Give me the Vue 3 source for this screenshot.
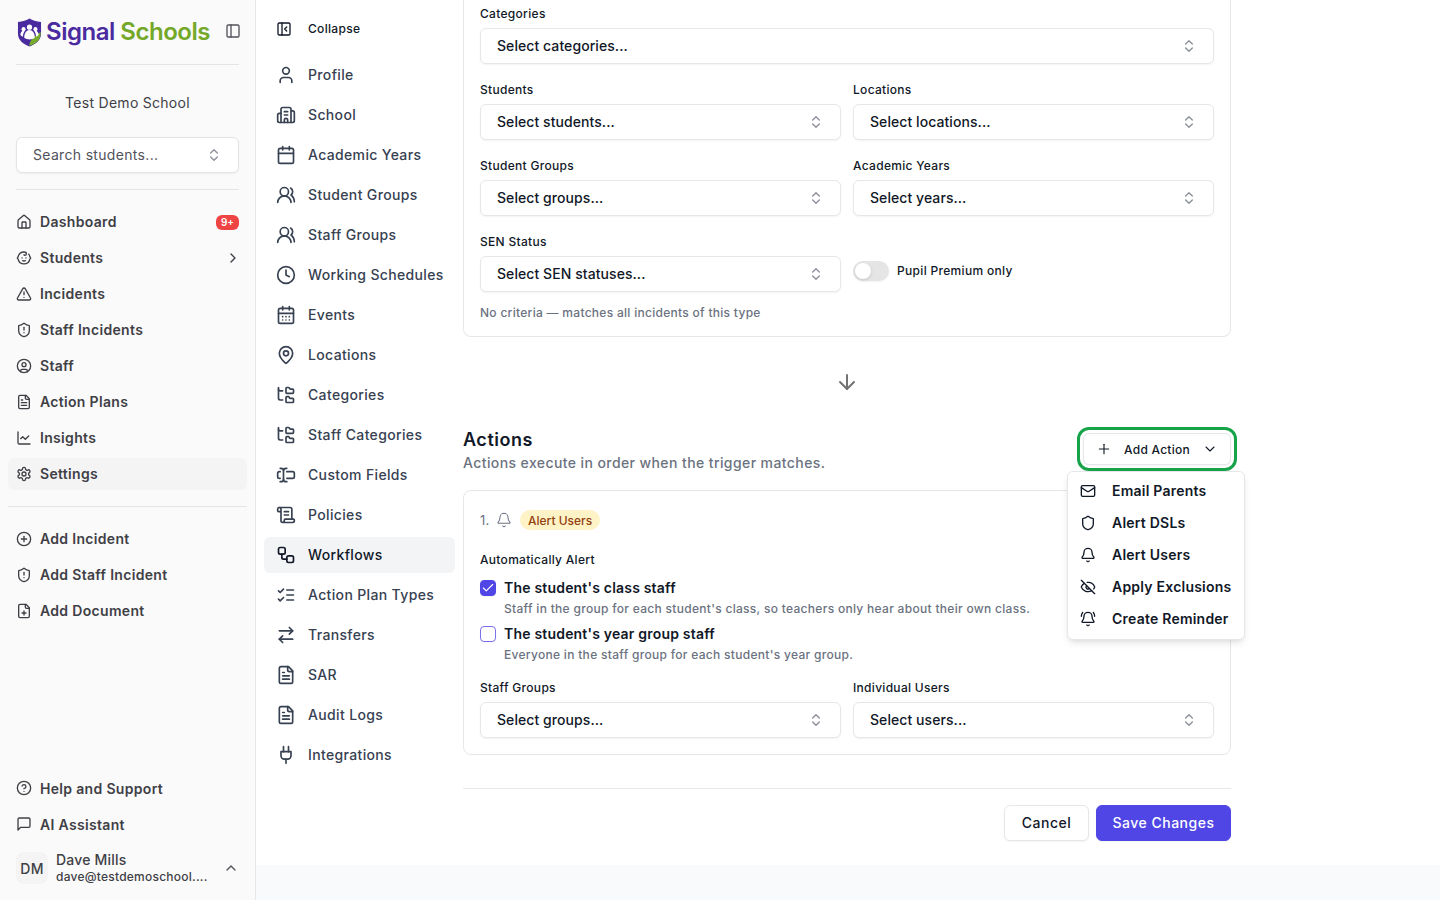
<script setup>
import { h } from 'vue'

const c = (x, y, r) => `M${x - r} ${y}a${r} ${r} 0 1 0 ${2 * r} 0a${r} ${r} 0 1 0 ${-2 * r} 0`
const rr = (x, y, w, h2, r) => `M${x + r} ${y}h${w - 2 * r}a${r} ${r} 0 0 1 ${r} ${r}v${h2 - 2 * r}a${r} ${r} 0 0 1 ${-r} ${r}h${-(w - 2 * r)}a${r} ${r} 0 0 1 ${-r} ${-r}v${-(h2 - 2 * r)}a${r} ${r} 0 0 1 ${r} ${-r}z`

const shield = 'M20 13c0 5-3.5 7.5-7.66 8.95a1 1 0 0 1-.67-.01C7.5 20.5 4 18 4 13V6a1 1 0 0 1 1-1c2 0 4.5-1.2 6.24-2.72a1.17 1.17 0 0 1 1.52 0C14.51 3.81 17 5 19 5a1 1 0 0 1 1 1z'
const file = 'M15 2H6a2 2 0 0 0-2 2v16a2 2 0 0 0 2 2h12a2 2 0 0 0 2-2V7Z'
const fold = 'M14 2v4a2 2 0 0 0 2 2h4'
const bellTop = 'M3.262 15.326A1 1 0 0 0 4 17h16a1 1 0 0 0 .74-1.673C19.41 13.956 18 12.499 18 8A6 6 0 0 0 6 8c0 4.499-1.411 5.956-2.738 7.326'
const fileText = [file, fold, 'M10 9H8', 'M16 13H8', 'M16 17H8']
const folderTree = [
  'M20 10a1 1 0 0 0 1-1V6a1 1 0 0 0-1-1h-2.5a1 1 0 0 1-.8-.4l-.9-1.2A1 1 0 0 0 15 3h-2a1 1 0 0 0-1 1v5a1 1 0 0 0 1 1Z',
  'M20 21a1 1 0 0 0 1-1v-3a1 1 0 0 0-1-1h-2.9a1 1 0 0 1-.88-.55l-.42-.85a1 1 0 0 0-.92-.6H13a1 1 0 0 0-1 1v5a1 1 0 0 0 1 1Z',
  'M3 5a2 2 0 0 0 2 2h3', 'M3 3v13a2 2 0 0 0 2 2h3'
]
const usersRound = ['M18 21a8 8 0 0 0-16 0', c(10, 8, 5), 'M22 20c0-3.37-2-6.5-4-8a5 5 0 0 0-.45-8.3']

const paths = {
  panel: [rr(3, 3, 18, 18, 2), 'M9 3v18'],
  updown: ['m7 15 5 5 5-5', 'm7 9 5-5 5 5'],
  house: ['M15 21v-8a1 1 0 0 0-1-1h-4a1 1 0 0 0-1 1v8', 'M3 10a2 2 0 0 1 .709-1.528l7-5.999a2 2 0 0 1 2.582 0l7 5.999A2 2 0 0 1 21 10v9a2 2 0 0 1-2 2H5a2 2 0 0 1-2-2z'],
  baby: ['M9 12h.01', 'M15 12h.01', 'M10 16c.5.3 1.2.5 2 .5s1.5-.2 2-.5', 'M19 6.3a9 9 0 0 1 1.8 3.9 2 2 0 0 1 0 3.6 9 9 0 0 1-17.6 0 2 2 0 0 1 0-3.6A9 9 0 0 1 12 3c2 0 3.5 1.1 3.5 2.5s-.9 2.5-2 2.5c-.8 0-1.5-.4-1.5-1'],
  triangle: ['m21.73 18-8-14a2 2 0 0 0-3.48 0l-8 14A2 2 0 0 0 4 21h16a2 2 0 0 0 1.73-3', 'M12 9v4', 'M12 17h.01'],
  shieldAlert: [shield, 'M12 8v4', 'M12 16h.01'],
  circleUser: [c(12, 12, 10), c(12, 10, 3), 'M7 20.662V19a2 2 0 0 1 2-2h6a2 2 0 0 1 2 2v1.662'],
  fileText,
  chart: ['M3 3v16a2 2 0 0 0 2 2h16', 'm19 9-5 5-4-4-3 3'],
  settings: ['M12.22 2h-.44a2 2 0 0 0-2 2v.18a2 2 0 0 1-1 1.73l-.43.25a2 2 0 0 1-2 0l-.15-.08a2 2 0 0 0-2.73.73l-.22.38a2 2 0 0 0 .73 2.73l.15.1a2 2 0 0 1 1 1.72v.51a2 2 0 0 1-1 1.74l-.15.09a2 2 0 0 0-.73 2.73l.22.38a2 2 0 0 0 2.73.73l.15-.08a2 2 0 0 1 2 0l.43.25a2 2 0 0 1 1 1.73V20a2 2 0 0 0 2 2h.44a2 2 0 0 0 2-2v-.18a2 2 0 0 1 1-1.73l.43-.25a2 2 0 0 1 2 0l.15.08a2 2 0 0 0 2.73-.73l.22-.39a2 2 0 0 0-.73-2.73l-.15-.08a2 2 0 0 1-1-1.74v-.5a2 2 0 0 1 1-1.74l.15-.09a2 2 0 0 0 .73-2.73l-.22-.38a2 2 0 0 0-2.73-.73l-.15.08a2 2 0 0 1-2 0l-.43-.25a2 2 0 0 1-1-1.73V4a2 2 0 0 0-2-2z', c(12, 12, 3)],
  circlePlus: [c(12, 12, 10), 'M8 12h8', 'M12 8v8'],
  filePlus: [file, fold, 'M9 15h6', 'M12 18v-6'],
  help: [c(12, 12, 10), 'M9.09 9a3 3 0 0 1 5.83 1c0 2-3 3-3 3', 'M12 17h.01'],
  message: ['M21 15a2 2 0 0 1-2 2H7l-4 4V5a2 2 0 0 1 2-2h14a2 2 0 0 1 2 2z'],
  up: ['m18 15-6-6-6 6'],
  right: ['m9 18 6-6-6-6'],
  down: ['m6 9 6 6 6-6'],
  collapse: [rr(3, 3, 18, 18, 2), 'M9 3v18', 'm16 15-3-3 3-3'],
  user: ['M19 21v-2a4 4 0 0 0-4-4H9a4 4 0 0 0-4 4v2', c(12, 7, 4)],
  building: ['M10 12h4', 'M10 8h4', 'M14 21v-3a2 2 0 0 0-4 0v3', 'M6 10H4a2 2 0 0 0-2 2v7a2 2 0 0 0 2 2h16a2 2 0 0 0 2-2V9a2 2 0 0 0-2-2h-2', 'M6 21V5a2 2 0 0 1 2-2h8a2 2 0 0 1 2 2v16'],
  calendar: ['M8 2v4', 'M16 2v4', rr(3, 4, 18, 18, 2), 'M3 10h18'],
  usersRound,
  clock: [c(12, 12, 10), 'M12 6v6l4 2'],
  calendarDays: ['M8 2v4', 'M16 2v4', rr(3, 4, 18, 18, 2), 'M3 10h18', 'M8 14h.01', 'M12 14h.01', 'M16 14h.01', 'M8 18h.01', 'M12 18h.01', 'M16 18h.01'],
  pin: ['M20 10c0 4.993-5.539 10.193-7.399 11.799a1 1 0 0 1-1.202 0C9.539 20.193 4 14.993 4 10a8 8 0 0 1 16 0', c(12, 10, 3)],
  folderTree,
  textInput: ['M5 4h1a3 3 0 0 1 3 3 3 3 0 0 1 3-3h1', 'M13 20h-1a3 3 0 0 1-3-3 3 3 0 0 1-3 3H5', 'M5 16H4a2 2 0 0 1-2-2v-4a2 2 0 0 1 2-2h1', 'M13 8h7a2 2 0 0 1 2 2v4a2 2 0 0 1-2 2h-7', 'M9 7v10'],
  scroll: ['M15 12h-5', 'M15 8h-5', 'M19 17V5a2 2 0 0 0-2-2H4', 'M8 21h12a2 2 0 0 0 2-2v-1a1 1 0 0 0-1-1H11a1 1 0 0 0-1 1v1a2 2 0 1 1-4 0V5a2 2 0 1 0-4 0v2a1 1 0 0 0 1 1h3'],
  workflow: [rr(3, 3, 8, 8, 2), 'M7 11v4a2 2 0 0 0 2 2h4', rr(13, 13, 8, 8, 2)],
  listChecks: ['m3 17 2 2 4-4', 'm3 7 2 2 4-4', 'M13 6h8', 'M13 12h8', 'M13 18h8'],
  transfer: ['m16 3 4 4-4 4', 'M20 7H4', 'm8 21-4-4 4-4', 'M4 17h16'],
  plug: ['M12 22v-5', 'M9 8V2', 'M15 8V2', 'M18 8v5a4 4 0 0 1-4 4h-4a4 4 0 0 1-4-4V8Z'],
  arrowDown: ['M12 5v14', 'm19 12-7 7-7-7'],
  plus: ['M5 12h14', 'M12 5v14'],
  mail: ['m22 7-8.991 5.727a2 2 0 0 1-2.009 0L2 7', rr(2, 4, 20, 16, 2)],
  shield: [shield],
  bell: ['M10.268 21a2 2 0 0 0 3.464 0', bellTop],
  eyeOff: ['M10.733 5.076a10.744 10.744 0 0 1 11.205 6.575 1 1 0 0 1 0 .696 10.747 10.747 0 0 1-1.444 2.49', 'M14.084 14.158a3 3 0 0 1-4.242-4.242', 'M17.479 17.499a10.75 10.75 0 0 1-15.417-5.151 1 1 0 0 1 0-.696 10.75 10.75 0 0 1 4.446-5.143', 'm2 2 20 20'],
  bellRing: ['M10.268 21a2 2 0 0 0 3.464 0', 'M22 8c0-2.3-.8-4.3-2-6', bellTop, 'M4 2C2.8 3.7 2 5.7 2 8'],
  check: ['M20 6 9 17l-5-5']
}

const Icon = (props) => h('svg', {
  width: props.size || 16,
  height: props.size || 16,
  viewBox: '0 0 24 24',
  fill: 'none',
  stroke: 'currentColor',
  'stroke-width': props.sw || 2,
  'stroke-linecap': 'round',
  'stroke-linejoin': 'round',
  style: 'flex:none;display:block'
}, paths[props.name].map((d) => h('path', { d })))
Icon.props = ['name', 'size', 'sw']

const mainNav = [
  { label: 'Dashboard', icon: 'house', badge: '9+' },
  { label: 'Students', icon: 'baby', chevron: true },
  { label: 'Incidents', icon: 'triangle' },
  { label: 'Staff Incidents', icon: 'shieldAlert' },
  { label: 'Staff', icon: 'circleUser' },
  { label: 'Action Plans', icon: 'fileText' },
  { label: 'Insights', icon: 'chart' },
  { label: 'Settings', icon: 'settings', active: true }
]
const quickNav = [
  { label: 'Add Incident', icon: 'circlePlus' },
  { label: 'Add Staff Incident', icon: 'shieldAlert' },
  { label: 'Add Document', icon: 'filePlus' }
]
const footNav = [
  { label: 'Help and Support', icon: 'help' },
  { label: 'AI Assistant', icon: 'message' }
]
const settingsNav = [
  { label: 'Profile', icon: 'user' },
  { label: 'School', icon: 'building' },
  { label: 'Academic Years', icon: 'calendar' },
  { label: 'Student Groups', icon: 'usersRound' },
  { label: 'Staff Groups', icon: 'usersRound' },
  { label: 'Working Schedules', icon: 'clock' },
  { label: 'Events', icon: 'calendarDays' },
  { label: 'Locations', icon: 'pin' },
  { label: 'Categories', icon: 'folderTree' },
  { label: 'Staff Categories', icon: 'folderTree' },
  { label: 'Custom Fields', icon: 'textInput' },
  { label: 'Policies', icon: 'scroll' },
  { label: 'Workflows', icon: 'workflow', active: true },
  { label: 'Action Plan Types', icon: 'listChecks' },
  { label: 'Transfers', icon: 'transfer' },
  { label: 'SAR', icon: 'fileText' },
  { label: 'Audit Logs', icon: 'fileText' },
  { label: 'Integrations', icon: 'plug' }
]
const menu = [
  { label: 'Email Parents', icon: 'mail' },
  { label: 'Alert DSLs', icon: 'shield' },
  { label: 'Alert Users', icon: 'bell' },
  { label: 'Apply Exclusions', icon: 'eyeOff' },
  { label: 'Create Reminder', icon: 'bellRing' }
]
const criteriaRows = [
  [{ label: 'Students', value: 'Select students...' }, { label: 'Locations', value: 'Select locations...' }],
  [{ label: 'Student Groups', value: 'Select groups...' }, { label: 'Academic Years', value: 'Select years...' }]
]
</script>

<template>
  <div class="page">
    <aside class="sidebar">
      <div class="brand">
        <svg class="logo" width="25" height="29" viewBox="0 0 26 30">
          <path d="M13 .5C16 2.600 20 3.800 25 4v12c0 6.800-5 11-12 13.500C6 27 1 22.800 1 16V4c5-.2 9-1.400 12-3.500z" fill="#4a2a9f" />
          <path d="M24.600 14.500V16c0 6.500-4.800 10.800-11.600 13-.4-2 .4-5 3.500-8 2.500-2.600 5.500-4.800 8.100-6.500z" fill="#76ac2b" />
          <circle cx="13" cy="9.500" r="2.700" fill="#fff" />
          <circle cx="6.800" cy="11.500" r="2.100" fill="#fff" />
          <circle cx="19.200" cy="11.500" r="2.100" fill="#fff" />
          <path d="M7.500 20.500c0-5 2.500-8 5.500-8s5.500 3 5.500 8c-1.500 1.200-3.500 1.800-5.500 1.800s-4-.6-5.500-1.800z" fill="#fff" />
          <path d="M3.500 17.500c0-2.500 1.400-4.400 3.300-4.400.5 0 .9.100 1.200.3-1.100 1.500-1.700 3.500-1.800 6-1-.4-1.900-1.100-2.700-1.900zM22.500 17.500c0-2.500-1.400-4.400-3.300-4.400-.5 0-.9.100-1.200.3 1.100 1.500 1.700 3.500 1.800 6 1-.4 1.900-1.100 2.700-1.900z" fill="#fff" />
        </svg>
        <span class="brand-name"><span class="purple">Signal</span> <span class="green">Schools</span></span>
        <Icon class="panel-icon" name="panel" :size="16" />
      </div>
      <div class="rule" />
      <div class="school">Test Demo School</div>
      <div class="student-search">
        <span class="tx">Search students...</span>
        <Icon class="updown" name="updown" :size="16" />
      </div>
      <div class="rule second" />
      <nav class="nav first">
        <a v-for="item in mainNav" :key="item.label" class="nav-item" :class="{ active: item.active }">
          <Icon :name="item.icon" :size="16" />
          <span class="nav-label tx">{{ item.label }}</span>
          <span v-if="item.badge" class="badge">{{ item.badge }}</span>
          <Icon v-if="item.chevron" class="nav-chevron" name="right" :size="16" />
        </a>
      </nav>
      <div class="rule wide" />
      <nav class="nav quick">
        <a v-for="item in quickNav" :key="item.label" class="nav-item">
          <Icon :name="item.icon" :size="16" />
          <span class="nav-label tx">{{ item.label }}</span>
        </a>
      </nav>
      <nav class="nav foot">
        <a v-for="item in footNav" :key="item.label" class="nav-item">
          <Icon :name="item.icon" :size="16" />
          <span class="nav-label">{{ item.label }}</span>
        </a>
      </nav>
      <div class="account">
        <div class="avatar">DM</div>
        <div class="who">
          <div class="who-name">Dave Mills</div>
          <div class="who-mail">dave@testdemoschool....</div>
        </div>
        <Icon class="acct-chevron" name="up" :size="16" />
      </div>
    </aside>

    <div class="right">
      <div class="workspace">
        <nav class="settings">
          <a class="set-item collapse">
            <Icon name="collapse" :size="16" />
            <span class="tx">Collapse</span>
          </a>
          <div class="set-list">
            <a v-for="item in settingsNav" :key="item.label" class="set-item" :class="{ active: item.active }">
              <Icon :name="item.icon" :size="20" />
              <span class="tx">{{ item.label }}</span>
            </a>
          </div>
        </nav>

        <main class="main">
          <section class="card criteria">
            <div class="field">
              <label class="label">Categories</label>
              <div class="select"><span class="tx">Select categories...</span><Icon class="updown" name="updown" :size="16" /></div>
            </div>
            <div v-for="(row, i) in criteriaRows" :key="i" class="two">
              <div v-for="f in row" :key="f.label" class="field">
                <label class="label">{{ f.label }}</label>
                <div class="select"><span class="tx">{{ f.value }}</span><Icon class="updown" name="updown" :size="16" /></div>
              </div>
            </div>
            <div class="two">
              <div class="field">
                <label class="label">SEN Status</label>
                <div class="select"><span class="tx">Select SEN statuses...</span><Icon class="updown" name="updown" :size="16" /></div>
              </div>
              <div class="toggle-row">
                <span class="toggle"><span class="knob" /></span>
                <span class="toggle-label tx">Pupil Premium only</span>
              </div>
            </div>
            <p class="hint">No criteria — matches all incidents of this type</p>
          </section>

          <div class="arrow"><Icon name="arrowDown" :size="24" /></div>

          <header class="actions-head">
            <div>
              <h2>Actions</h2>
              <p>Actions execute in order when the trigger matches.</p>
            </div>
            <div class="add-wrap">
              <button class="add-btn">
                <Icon name="plus" :size="16" :sw="1.7" />
                <span>Add Action</span>
                <Icon name="down" :size="16" :sw="1.6" />
              </button>
              <span class="ring" />
              <div class="menu">
                <div v-for="m in menu" :key="m.label" class="menu-item">
                  <Icon :name="m.icon" :size="16" />
                  <span class="tx">{{ m.label }}</span>
                </div>
              </div>
            </div>
          </header>

          <section class="card action">
            <div class="action-top">
              <span class="num">1.</span>
              <Icon class="num-bell" name="bell" :size="16" :sw="1.6" />
              <span class="pill">Alert Users</span>
            </div>
            <div class="label auto">Automatically Alert</div>
            <div class="check-row">
              <span class="box on"><Icon name="check" :size="14" :sw="2" /></span>
              <span class="check-title">The student's class staff</span>
            </div>
            <div class="check-desc">Staff in the group for each student's class, so teachers only hear about their own class.</div>
            <div class="check-row next">
              <span class="box" />
              <span class="check-title">The student's year group staff</span>
            </div>
            <div class="check-desc">Everyone in the staff group for each student's year group.</div>
            <div class="two last">
              <div class="field">
                <label class="label">Staff Groups</label>
                <div class="select"><span class="tx">Select groups...</span><Icon class="updown" name="updown" :size="16" /></div>
              </div>
              <div class="field">
                <label class="label">Individual Users</label>
                <div class="select"><span class="tx">Select users...</span><Icon class="updown" name="updown" :size="16" /></div>
              </div>
            </div>
          </section>

          <footer class="form-foot">
            <button class="btn cancel"><span class="tx">Cancel</span></button>
            <button class="btn save"><span class="tx">Save Changes</span></button>
          </footer>
        </main>
      </div>
      <div class="band" />
    </div>
  </div>
</template>

<style>
html, body { margin: 0; background: #fff; }
</style>

<style scoped>
.page {
  display: flex;
  height: 900px;
  width: 1440px;
  overflow: hidden;
  font-family: Inter, "Liberation Sans", sans-serif;
  letter-spacing: 0.02em;
  color: #111827;
}
a { display: flex; }
p, h2 { margin: 0; }
button { font: inherit; letter-spacing: inherit; cursor: pointer; }
.tx { display: block; padding-bottom: 2px; }

.sidebar {
  width: 255px;
  flex: none;
  display: flex;
  flex-direction: column;
  background: #fafafa;
  border-right: 1px solid #e5e7eb;
  color: #3f3f46;
}
.brand {
  height: 64px;
  padding: 0 16px 2px 17px;
  display: flex;
  align-items: center;
  box-sizing: border-box;
}
.logo { flex: none; margin-top: 2px; }
.brand-name {
  margin-left: 4px;
  font-size: 24px;
  font-weight: 600;
  letter-spacing: -0.02em;
  white-space: nowrap;
}
.purple { color: #4a2a9f; }
.green { color: #74a828; }
.panel-icon { margin-left: auto; margin-right: -2px; color: #52525b; }
.rule { height: 1px; margin: 0 16px; background: #e4e4e7; flex: none; }
.rule.second { margin-top: 16px; }
.rule.wide { margin: 16px 8px 0; }
.school { margin-top: 28px; line-height: 20px; font-size: 14px; text-align: center; letter-spacing: .02em; color: #3f3f46; }
.student-search {
  margin: 24px 16px 0;
  height: 36px;
  box-sizing: border-box;
  background: #fff;
  border: 1px solid #e4e4e7;
  border-radius: 6px;
  box-shadow: 0 1px 2px rgba(0,0,0,.05);
  display: flex;
  align-items: center;
  justify-content: space-between;
  padding: 0 16px;
  font-size: 14px;
  color: #52525b;
}
.updown { color: #8b8f98; }
.nav { display: flex; flex-direction: column; gap: 4px; padding: 0 8px; }
.nav.first { margin-top: 16px; }
.nav.quick { margin-top: 16px; }
.nav.foot { margin-top: auto; }
.nav-item {
  height: 32px;
  box-sizing: border-box;
  padding: 0 8px;
  border-radius: 6px;
  align-items: center;
  gap: 8px;
  font-size: 14px;
  font-weight: 600;
  color: #3f3f46;
}
.nav-item.active { background: #f4f4f5; }
.nav-label { flex: 1; white-space: nowrap; }
.nav-chevron { margin-right: -2px; }
.badge {
  background: #ef4444;
  color: #fff;
  font-size: 10px;
  font-weight: 600;
  letter-spacing: 0;
  line-height: 15px;
  padding: 0 5px;
  border-radius: 6px;
}
.account {
  margin: 12px 0 16px;
  padding: 0 16px;
  display: flex;
  align-items: center;
  gap: 8px;
}
.avatar {
  width: 32px;
  height: 32px;
  flex: none;
  background: #f4f4f5;
  border-radius: 8px;
  display: flex;
  align-items: center;
  justify-content: center;
  font-size: 14px;
  font-weight: 500;
}
.who { flex: 1; min-width: 0; height: 32px; }
.who-name { font-size: 14px; font-weight: 500; line-height: 16px; letter-spacing: .015em; }
.who-mail { margin-top: 1px; font-size: 12px; font-weight: 500; line-height: 16px; letter-spacing: .02em; white-space: nowrap; overflow: hidden; }
.acct-chevron { color: #52525b; }

.right { flex: 1; display: flex; flex-direction: column; min-width: 0; }
.workspace { height: 865px; flex: none; display: flex; background: #fff; overflow: hidden; }
.band { flex: 1; background: #f9fafb; }

.settings { width: 207px; flex: none; padding: 11px 8px 0; box-sizing: border-box; }
.set-list { display: flex; flex-direction: column; gap: 4px; margin-top: 10px; }
.set-item {
  height: 36px;
  padding: 0 12px;
  border-radius: 6px;
  align-items: center;
  gap: 12px;
  font-size: 14px;
  font-weight: 500;
  letter-spacing: .025em;
  color: #374151;
  white-space: nowrap;
}
.set-item.active { background: #f3f4f6; color: #111827; }
.set-item.collapse { font-size: 12px; color: #111827; gap: 16px; }

.main { width: 768px; flex: none; }
.card { border: 1px solid #e5e7eb; border-radius: 8px; box-sizing: border-box; }
.criteria {
  border-top: 0;
  border-top-left-radius: 0;
  border-top-right-radius: 0;
  padding: 6px 16px 15px;
  display: flex;
  flex-direction: column;
  gap: 18px;
}
.field { min-width: 0; }
.label { display: block; font-size: 12px; font-weight: 500; line-height: 16px; letter-spacing: .025em; color: #111827; }
.select {
  margin-top: 6px;
  height: 36px;
  box-sizing: border-box;
  border: 1px solid #e5e7eb;
  border-radius: 6px;
  box-shadow: 0 1px 2px rgba(0,0,0,.05);
  background: #fff;
  display: flex;
  align-items: center;
  justify-content: space-between;
  padding: 0 16px;
  font-size: 14px;
  font-weight: 500;
  letter-spacing: .005em;
  color: #111827;
}
.two { display: grid; grid-template-columns: 361px 361px; gap: 12px; }
.toggle-row { display: flex; align-items: center; gap: 8px; margin-top: 27px; align-self: start; height: 20px; }
.toggle {
  width: 36px;
  height: 20px;
  border-radius: 10px;
  background: #e5e5e5;
  display: flex;
  align-items: center;
  padding: 0 2px;
  box-sizing: border-box;
  box-shadow: 0 1px 2px rgba(0,0,0,.05);
}
.knob { width: 16px; height: 16px; border-radius: 50%; background: #fff; box-shadow: 0 1px 3px rgba(0,0,0,.15); }
.toggle-label { font-size: 12px; font-weight: 500; }
.hint { margin-top: -5px; font-size: 12px; font-weight: 500; line-height: 16px; letter-spacing: .024em; color: #6b7280; }

.arrow { margin: 33px 0 32px; display: flex; justify-content: center; color: #737373; }
.actions-head { display: flex; justify-content: space-between; align-items: flex-start; height: 47px; }
.actions-head h2 { font-size: 18px; font-weight: 600; line-height: 28px; letter-spacing: .03em; }
.actions-head p { font-size: 14px; font-weight: 500; line-height: 20px; margin-top: -1px; letter-spacing: .029em; color: #6b7280; }
.add-wrap { position: relative; margin-top: 7px; }
.add-btn {
  width: 148px;
  height: 32px;
  box-sizing: border-box;
  border: 1px solid #e5e7eb;
  border-radius: 6px;
  background: #fff;
  box-shadow: 0 1px 2px rgba(0,0,0,.05);
  display: flex;
  align-items: center;
  justify-content: space-between;
  padding: 0 12px;
  font-size: 12px;
  font-weight: 500;
  letter-spacing: .02em;
  color: #111827;
}
.ring {
  position: absolute;
  left: -6px;
  right: -6px;
  top: -6px;
  bottom: -6px;
  border: 3px solid #16a34a;
  border-radius: 12px;
  pointer-events: none;
}
.menu {
  position: absolute;
  left: -16px;
  top: 38px;
  width: 178px;
  height: 169px;
  box-sizing: border-box;
  background: #fff;
  border: 1px solid #e5e7eb;
  border-radius: 6px;
  box-shadow: 0 4px 8px -2px rgba(0,0,0,.12), 0 2px 4px -2px rgba(0,0,0,.08);
  padding: 3px 0;
  z-index: 2;
}
.menu-item {
  height: 32px;
  display: flex;
  align-items: center;
  gap: 16px;
  padding: 0 12px;
  font-size: 14px;
  font-weight: 600;
  letter-spacing: .016em;
  white-space: nowrap;
  color: #111827;
}
.action { margin-top: 17px; padding: 19px 16px 16px; }
.action-top { display: flex; align-items: center; height: 20px; }
.num { font-size: 13px; color: #6b7280; width: 16px; }
.num-bell { color: #6b7280; }
.pill {
  margin-left: 8px;
  background: #fef3c7;
  color: #92400e;
  font-size: 12px;
  font-weight: 500;
  letter-spacing: 0;
  line-height: 19px;
  padding: 1px 8px 0;
  border-radius: 10px;
}
.auto { margin-top: 22px; }
.check-row { display: flex; align-items: center; gap: 8px; margin-top: 10px; height: 20px; }
.check-row.next { margin-top: 7px; }
.box {
  width: 16px;
  height: 16px;
  box-sizing: border-box;
  flex: none;
  border-radius: 4px;
  border: 1.5px solid #7c6ff0;
  display: flex;
  align-items: center;
  justify-content: center;
  color: #fff;
  box-shadow: 0 1px 2px rgba(0,0,0,.05);
}
.box.on { background: #4f46e5; border-color: #4f46e5; }
.check-title { font-size: 14px; font-weight: 600; line-height: 20px; letter-spacing: .014em; color: #111827; }
.check-desc { margin: 3px 0 0 24px; font-size: 12px; font-weight: 500; line-height: 16px; letter-spacing: .025em; color: #6b7280; white-space: nowrap; }
.two.last { margin-top: 17px; }
.form-foot {
  margin-top: 33px;
  border-top: 1px solid #e5e7eb;
  padding-top: 16px;
  display: flex;
  justify-content: flex-end;
  gap: 7px;
}
.btn {
  height: 36px;
  box-sizing: border-box;
  border-radius: 6px;
  font-size: 14px;
  font-weight: 500;
  letter-spacing: .035em;
  padding: 0;
  box-shadow: 0 1px 2px rgba(0,0,0,.05);
}
.cancel { width: 85px; background: #fff; border: 1px solid #e5e7eb; color: #111827; }
.save { width: 135px; background: #4f46e5; border: 1px solid #4f46e5; color: #fff; }
</style>
